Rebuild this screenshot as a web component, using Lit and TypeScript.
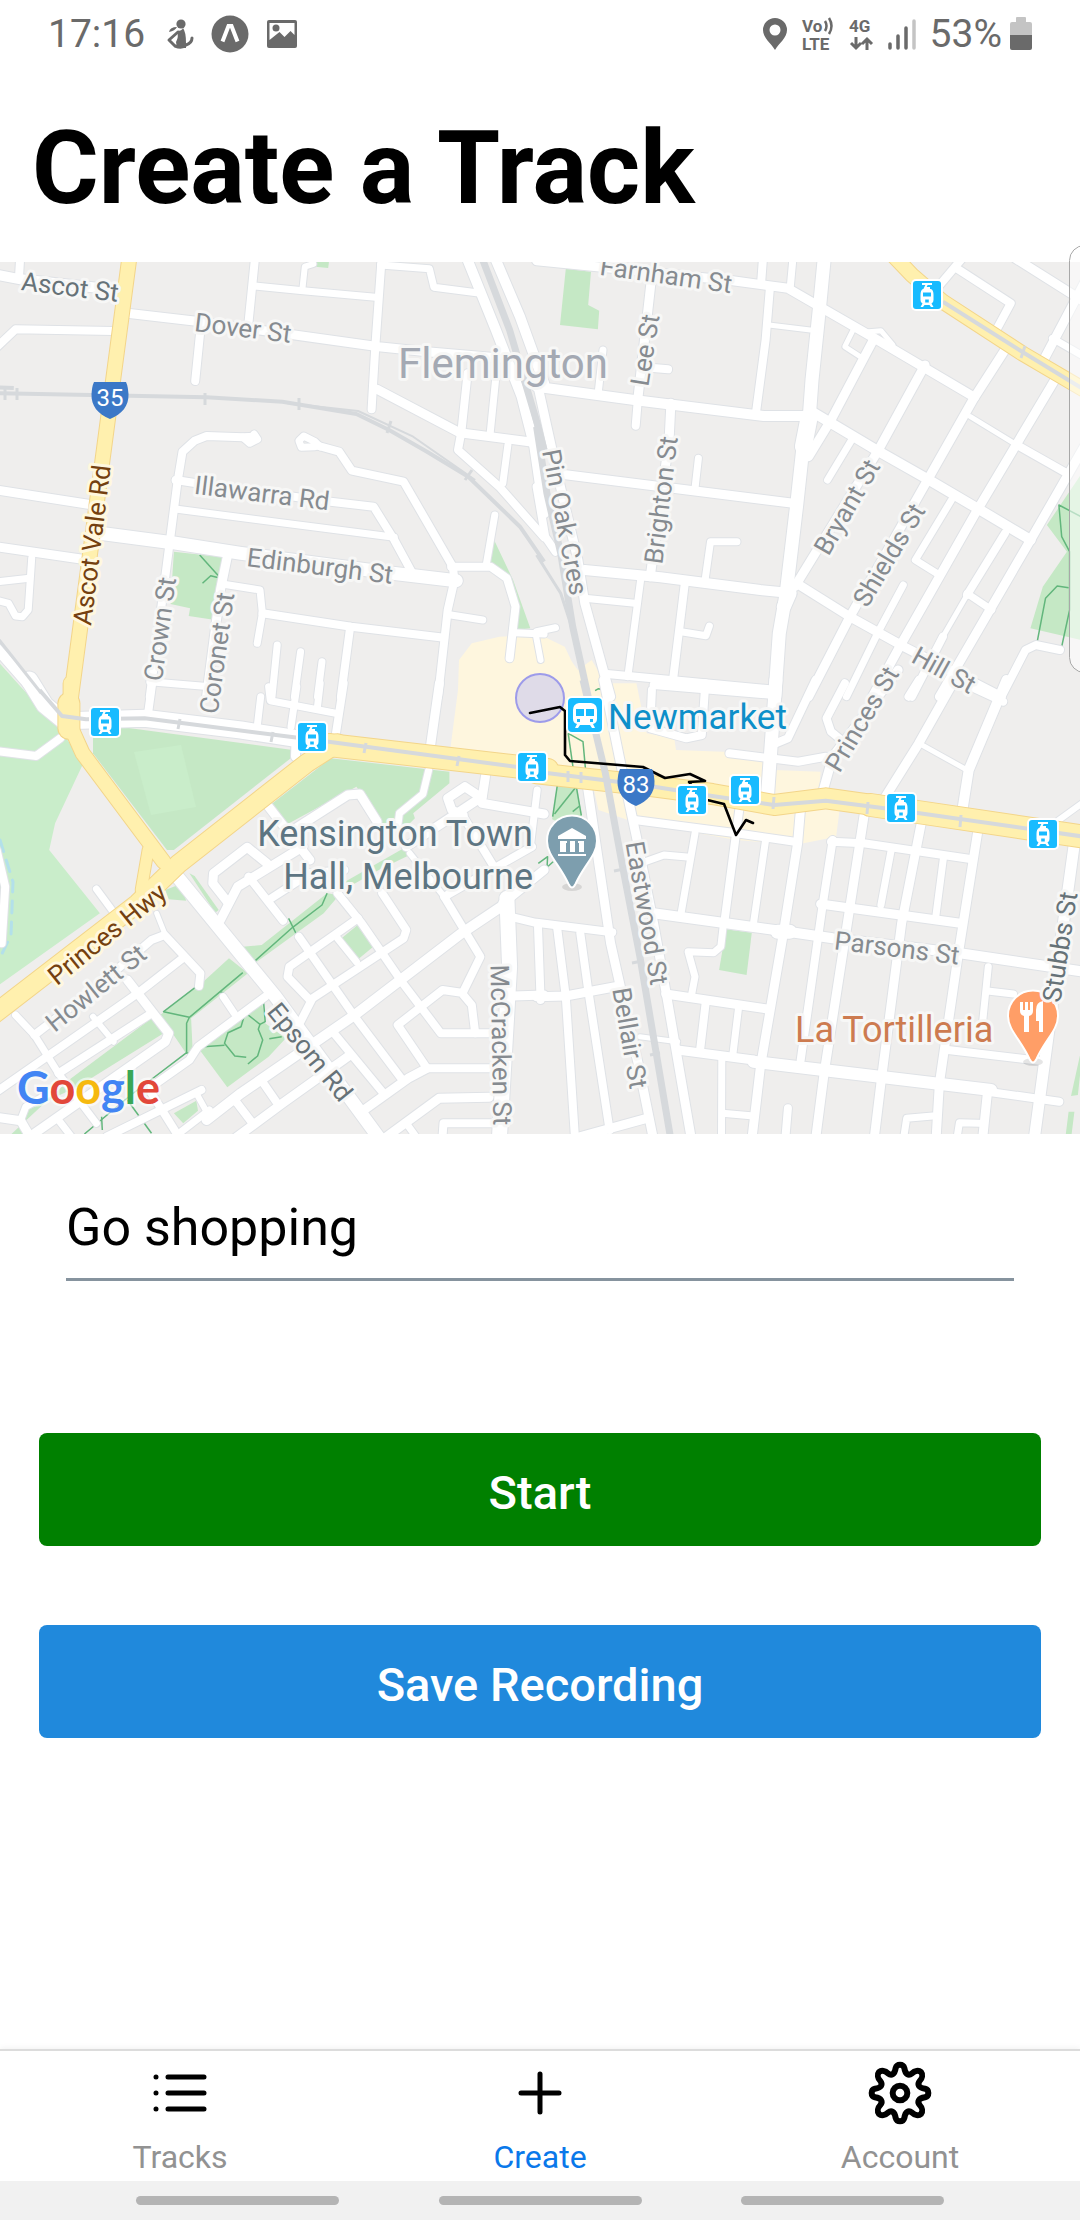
import { LitElement, html, css, svg } from "lit";
import { customElement, property } from "lit/decorators.js";

/** One survey sheet of the map: its origin in map pixels and its shapes in sheet units. */
interface Sheet {
  x: number;
  y: number;
  parks: string[];
  lawns: string[];
  shops: string[];
  paths: string[];
  roads: [number, string][];
  highways: [number, string][];
  rails: [number, string][];
}

interface Label {
  text: string;
  x: number;
  y: number;
  turn: number;
  kind: string;
}

const UNIT_X = 2.904;
const UNIT_Y = 3;

const project = (sheet: Sheet, points: string) =>
  points
    .split(" ")
    .map((pair) => {
      const [x, y] = pair.split(",").map(Number);
      return `${(sheet.x + x / UNIT_X).toFixed(1)},${(sheet.y + y / UNIT_Y).toFixed(1)}`;
    })
    .join(" ");

const SHEETS: Sheet[] = [
  {
    x: 0,
    y: 250,
    parks: [
      "505,905 650,922 625,1110 548,1098 552,1075 495,1062",
      "1435,870 1490,990 1540,1135 1500,1140 1500,1030 1470,975 1420,945",
      "912,36 955,36 953,54 915,50",
    ],
    lawns: [],
    shops: [],
    paths: ["580,915 638,982", "588,1000 612,977 638,984"],
    roads: [
      [10, "-10,74 60,88 340,120"],
      [8, "58,30 55,88"],
      [9, "370,190 570,214 1100,290 1240,305 1460,325"],
      [8, "740,30 722,215"],
      [7, "740,108 880,122 1090,142"],
      [6, "878,120 885,50 910,42"],
      [8, "1108,30 1090,290 1079,478"],
      [7, "1105,45 1247,56 1260,112 1395,130"],
      [8, "-10,292 45,238 330,243"],
      [8, "582,240 567,393"],
      [9, "1095,418 1335,548 1570,580"],
      [8, "1358,370 1340,545 1330,600 1450,710 1580,862"],
      [7, "1440,380 1423,555"],
      [7, "1475,585 1460,700"],
      [10, "1358,30 1440,240 1515,440 1552,590 1580,790"],
      [10, "1440,30 1510,200 1580,400"],
      [8, "740,560 705,562 600,558 565,572 530,605 515,700 490,900 435,1340"],
      [7, "738,552 748,568 725,580 705,562"],
      [8, "915,585 985,605 1022,662 1172,695 1315,950 1320,990 1300,1080 1272,1340"],
      [7, "915,590 875,592 868,572 882,558 915,575 930,590"],
      [8, "510,690 570,700 960,755 1085,770 1145,870 1195,965"],
      [7, "515,778 1145,862"],
      [9, "-10,720 270,765"],
      [9, "-10,890 240,928"],
      [13, "290,850 500,878 700,910 1140,970 1325,992"],
      [7, "92,925 82,1080 65,1100 45,1098 25,1060 -5,1052"],
      [7, "85,985 -5,995"],
      [9, "660,920 640,1020 600,1340"],
      [7, "650,1003 755,1020 762,1090 747,1180"],
      [8, "762,1090 1020,1130 1290,1163"],
      [8, "1017,1130 990,1340"],
      [7, "805,1185 790,1340"],
      [7, "873,1205 855,1340"],
      [7, "935,1235 922,1340"],
      [7, "1310,1095 1402,1110"],
      [7, "1437,795 1412,945"],
      [8, "1310,950 1425,950 1472,985 1497,1070 1480,1225"],
      [7, "1495,1148 1580,1152"],
      [6, "1555,1150 1570,1230"],
      [7, "435,1295 610,1310"],
      [10, "-10,1195 130,1360"],
    ],
    highways: [[14, "376,20 204,1360"]],
    rails: [
      [4, "-10,430 600,442 820,455 1035,492 1130,540 1240,605 1360,680 1510,830 1580,935"],
      [2, "835,460 1040,483 1200,560 1380,690"],
      [4, "-10,412 40,414"],
      [7, "1402,30 1480,240 1560,520 1580,600"],
      [3, "-10,1160 120,1330"],
    ],
  },
  {
    x: 540,
    y: 240,
    parks: [
      "75,86 148,95 140,195 172,212 168,268 58,255",
      "1580,690 1472,855 1530,935 1460,1040 1424,1165 1580,1202",
    ],
    lawns: [],
    shops: [],
    paths: [
      "1580,835 1507,795 1515,890 1538,935 1538,1110 1515,1220",
      "1443,1210 1468,1075 1502,1038 1535,1043",
    ],
    roads: [
      [9, "-10,62 180,82 560,122 720,145 960,288 1262,472"],
      [8, "648,50 642,130"],
      [7, "735,50 727,140"],
      [8, "668,140 655,300 627,520"],
      [13, "826,50 812,200 790,420 782,530"],
      [17, "782,530 765,620"],
      [13, "765,610 745,800 715,1060 695,1180 682,1370"],
      [14, "725,1060 708,1100"],
      [5, "665,255 785,270"],
      [9, "322,130 285,470"],
      [8, "285,470 278,557"],
      [8, "320,383 372,388"],
      [7, "183,330 170,450"],
      [10, "-10,440 290,482 650,528 790,528"],
      [9, "380,490 375,600 320,1010"],
      [9, "75,704 735,790"],
      [7, "460,655 450,745"],
      [10, "130,990 350,1012 640,1050 720,1058"],
      [7, "572,905 495,905 478,1030"],
      [7, "130,1075 275,1090"],
      [7, "292,1020 255,1310"],
      [8, "420,1035 385,1330"],
      [7, "410,1175 482,1187 492,1158"],
      [9, "-10,420 50,700 110,960 130,1090 205,1370"],
      [8, "-10,740 15,890 45,935"],
      [7, "-10,1175 45,1163"],
      [8, "195,1302 690,1350"],
      [8, "1230,50 1120,185"],
      [8, "1210,85 1367,190 1325,270"],
      [9, "1380,55 1580,185"],
      [9, "1580,130 1465,355"],
      [7, "1488,295 1580,350"],
      [9, "968,300 845,540 780,650"],
      [5, "910,268 885,320 930,350"],
      [5, "955,275 990,272 1025,315 965,300"],
      [9, "1118,375 980,635 740,1040"],
      [9, "1350,330 1260,475 1120,730 900,1130 780,1370"],
      [9, "1495,420 1270,810 1050,1210 965,1370"],
      [9, "1580,620 1430,890 1160,1370"],
      [5, "1250,530 1385,615"],
      [8, "1385,615 1530,700"],
      [10, "790,515 980,632 1130,720 1270,805 1425,900"],
      [7, "905,600 835,720"],
      [7, "1198,775 1090,960 1160,1005"],
      [8, "1350,880 1240,1065"],
      [5, "1240,1065 1170,1190"],
      [8, "1170,1190 1080,1370"],
      [7, "1240,1060 1312,1110"],
      [9, "745,1030 900,1130 1060,1222 1340,1370"],
      [7, "1055,1035 985,1170 890,1370"],
      [8, "1340,1370 1410,1230 1440,1215 1510,1230"],
    ],
    highways: [[14, "1020,40 1080,105 1170,185 1400,340 1590,455"]],
    rails: [
      [4, "1170,185 1400,335 1590,455"],
      [7, "-10,560 20,760 60,940 95,1160 140,1370"],
      [3, "-10,945 60,1060 98,1180"],
    ],
  },
  {
    x: 0,
    y: 690,
    parks: [
      "270,100 850,180 850,200 505,480 485,480 270,190",
      "960,205 1305,245 1305,280 1200,370 1205,385 1180,410 1110,400 1035,290 830,405 785,345",
      "665,805 720,850 555,985 560,1090 540,1090 465,975 580,885",
      "705,770 760,765 950,610 985,615 940,670 740,820",
      "440,985 475,1030 225,1190 60,1270 90,1325 20,1345 160,1210 200,1170",
      "580,1080 760,930 770,1000 830,1045 780,1100 660,1192",
      "1045,700 1090,765 1040,808 992,745",
      "505,1270 570,1232 575,1262 532,1300",
      "550,550 565,558 635,660 625,668",
      "480,600 530,580 540,632 490,628",
      "1180,470 1200,490 1100,540 980,610 960,600",
    ],
    lawns: [
      "-10,-90 60,-10 170,110 242,220 160,400 143,480 290,670 -10,890",
      "390,185 525,165 570,350 440,375",
    ],
    shops: ["1308,175 1330,0 1333,-90 1370,-140 1450,-160 1570,-165 1640,-130 1700,0 1700,260"],
    paths: [
      "570,890 475,965 550,982 705,848",
      "550,982 542,1000 542,1088 380,1215 245,1332",
      "552,1088 540,1090",
      "738,815 850,712 935,645 950,610",
      "838,685 862,735",
      "765,930 770,995 755,1003 712,968 700,1010 662,1028 652,1060 682,1098 715,1102",
      "755,1003 750,1018 763,1050 748,1098 720,1122",
      "590,1070 652,1066",
      "782,1046 818,1040",
      "370,1230 440,1330",
      "295,1280 297,1320",
      "1500,600 1580,530",
      "640,905 650,910",
    ],
    roads: [
      [17, "85,-30 130,45 195,100"],
      [17, "195,92 420,85 700,120 900,152"],
      [8, "-10,183 105,198 175,145"],
      [8, "442,-20 430,70"],
      [7, "757,20 748,100"],
      [7, "780,-10 785,32 975,70"],
      [7, "862,-10 845,110"],
      [7, "930,-20 922,50"],
      [8, "998,-20 975,135"],
      [9, "1276,-20 1250,170"],
      [7, "1245,240 1228,312 1160,370 1155,410"],
      [9, "860,150 858,200"],
      [9, "780,350 900,510"],
      [9, "820,440 1010,315 1045,312 1095,395"],
      [9, "775,520 718,472 620,550 618,580 660,635"],
      [9, "640,690 690,590 880,470"],
      [8, "722,560 822,692"],
      [8, "780,630 900,550 1000,540"],
      [9, "1410,258 1400,325 1350,290 1300,325 1312,360 1345,375"],
      [9, "1400,340 1580,372"],
      [7, "1560,300 1540,470"],
      [8, "1340,370 1440,540"],
      [8, "1545,470 1290,620"],
      [9, "1400,320 1180,470"],
      [10, "1470,640 1340,730 1030,975 700,1210 600,1290"],
      [9, "1460,640 1580,540"],
      [6, "1190,490 1290,620"],
      [8, "1290,620 1395,800 1345,905"],
      [15, "1472,625 1480,830 1450,1350"],
      [8, "1490,682 1562,700 1570,930"],
      [9, "1490,918 1580,915"],
      [8, "980,610 1050,700 1170,880 1280,1030 1420,1030"],
      [8, "1110,610 1180,720 1172,745 900,930 835,860 840,830 1040,685"],
      [8, "868,740 1030,980 1165,1165"],
      [7, "980,745 1035,815"],
      [8, "905,930 865,1010"],
      [8, "1380,1030 1370,945 1340,908 1285,900 1155,1005 1240,1135 1430,1135"],
      [8, "970,1030 1110,1205"],
      [9, "1050,1265 1185,1165 1240,1135"],
      [9, "650,1370 820,1240 1010,1100"],
      [9, "1110,1350 1275,1225 1420,1222"],
      [8, "1285,1340 1288,1300 1430,1300"],
      [7, "1180,1300 1215,1350"],
      [8, "688,1238 730,1295"],
      [8, "762,1175 802,1235"],
      [7, "45,975 100,1035 170,1150 280,1300"],
      [8, "-10,1205 400,910 530,805"],
      [8, "100,1035 270,900 440,750 478,735 582,850 578,888"],
      [5, "455,670 480,735"],
      [9, "370,870 490,1030 480,1055 80,1345"],
      [8, "170,1150 440,970"],
      [6, "270,980 330,1055"],
      [8, "770,920 575,1070 550,1110 440,1190"],
      [7, "648,920 680,970"],
      [8, "310,1340 585,1200"],
      [8, "440,1210 525,1350"],
      [7, "520,1330 608,1260"],
      [6, "570,1210 600,1265"],
      [9, "-10,1282 60,1292 90,1345"],
      [7, "60,1290 75,1250 150,1205"],
      [7, "170,1290 215,1350"],
      [7, "280,597 325,660"],
      [8, "-10,480 15,590 5,760"],
      [13, "515,560 800,920 1105,1350"],
    ],
    highways: [
      [11, "430,480 410,600"],
      [14, "205,-20 205,110 240,190 475,515"],
      [21, "200,40 200,115"],
      [18, "-20,975 400,640 520,520 890,220 980,160"],
      [22, "955,165 1590,240"],
    ],
    rails: [
      [4, "115,0 180,78 250,88 420,85 900,148 1590,243"],
    ],
  },
  {
    x: 540,
    y: 690,
    parks: [
      "540,718 615,728 600,855 520,840",
      "50,285 105,288 122,378 100,420 35,388",
      "1580,1040 1562,1215 1542,1218",
      "1535,1265 1552,1265 1543,1340 1527,1332",
    ],
    lawns: [],
    shops: [
      "-10,-160 60,-130 110,-60 150,-90 190,-20 280,-20 310,130 390,145 395,180 650,190 680,240 815,245 810,310 870,360 860,440 740,465 570,450 270,395 170,360 150,270 -10,270",
    ],
    paths: [
      "82,130 125,155 133,248",
      "82,130 97,240",
      "50,288 37,380",
      "105,288 120,376",
      "42,372 105,290",
      "95,365 115,348",
      "-10,560 38,515",
      "-5,520 22,500 20,540",
      "160,2 170,-4 182,-2",
    ],
    roads: [
      [9, "135,270 165,480 205,760 240,920 285,1120 330,1350"],
      [9, "185,-30 230,200 280,440 330,700 370,930 440,1350"],
      [8, "-10,698 210,727"],
      [8, "50,715 75,920 102,1350"],
      [8, "117,730 140,900 202,1320"],
      [9, "-10,920 75,918 230,888"],
      [9, "100,1345 310,1285"],
      [8, "275,390 570,430 740,455"],
      [8, "580,350 568,440 535,700"],
      [9, "757,350 748,460 705,740 640,1130 615,1350"],
      [7, "655,450 620,700"],
      [7, "450,430 410,668"],
      [7, "305,515 360,495 435,502"],
      [10, "330,670 540,700 720,725 850,745 1220,790 1580,845"],
      [14, "690,725 725,725"],
      [7, "533,700 525,770 505,788 430,785 450,860 440,915"],
      [9, "365,912 665,958"],
      [8, "482,930 465,1080"],
      [7, "577,950 560,1095"],
      [5, "290,1040 400,1055"],
      [9, "400,1080 620,1110"],
      [12, "620,1115 840,1142 1310,1200"],
      [8, "1300,1205 1508,1235"],
      [7, "528,1100 527,1350"],
      [7, "530,1270 620,1278"],
      [8, "720,1255 712,1350"],
      [8, "845,455 940,460 1250,507"],
      [8, "850,450 820,650 757,1110"],
      [9, "942,370 870,850 825,1150 800,1350"],
      [7, "1020,480 990,645"],
      [9, "1107,400 1050,700 990,1180 970,1350"],
      [7, "1172,500 1150,675"],
      [9, "815,642 1220,700"],
      [9, "1272,420 1215,790 1160,1180 1150,1350"],
      [7, "1302,830 1285,1000"],
      [7, "1300,903 1375,912"],
      [8, "1185,1080 1450,1112"],
      [11, "1552,460 1500,850 1435,1350"],
      [9, "1300,1200 1285,1350"],
      [7, "1055,1350 1065,1285 1140,1278"],
      [7, "1210,1350 1218,1298 1275,1300"],
      [8, "325,0 320,115 425,145 470,135 480,-20"],
      [8, "330,-15 680,15"],
      [13, "685,-30 660,325"],
      [8, "685,160 720,145 800,-30"],
      [8, "550,190 750,215 830,200"],
      [8, "885,-20 832,85 845,125 875,150"],
      [9, "1040,-60 850,200 820,310"],
      [9, "1215,-50 1100,160 1000,325"],
      [10, "1355,-30 1245,240 1228,350"],
      [5, "1100,160 1240,240"],
      [8, "1230,-20 1345,35"],
      [8, "1070,20 1100,-30"],
      [6, "1500,395 1580,335"],
    ],
    highways: [
      [20, "-10,250 300,285 500,312 680,345 830,325 1000,350"],
      [22, "960,345 1580,440"],
    ],
    rails: [
      [4, "-10,245 300,285 500,318 680,345 830,332 1000,355 1580,440"],
      [7, "125,-30 190,250 240,530 290,800 380,1350"],
    ],
  },
];

const LABELS: Label[] = [
  { text: "Ascot St", x: 70, y: 287, turn: 7, kind: "street dark" },
  { text: "Dover St", x: 243, y: 328, turn: 7, kind: "street" },
  { text: "Illawarra Rd", x: 262, y: 493, turn: 7, kind: "street" },
  { text: "Edinburgh St", x: 320, y: 566, turn: 7, kind: "street" },
  { text: "Ascot Vale Rd", x: 92, y: 545, turn: -83, kind: "street route" },
  { text: "Crown St", x: 160, y: 629, turn: -82, kind: "street" },
  { text: "Coronet St", x: 217, y: 653, turn: -82, kind: "street" },
  { text: "Farnham St", x: 666, y: 275, turn: 8, kind: "street" },
  { text: "Lee St", x: 645, y: 350, turn: -81, kind: "street" },
  { text: "Brighton St", x: 661, y: 500, turn: -83, kind: "street" },
  { text: "Pin Oak Cres", x: 565, y: 522, turn: 79, kind: "street" },
  { text: "Bryant St", x: 847, y: 507, turn: -60, kind: "street" },
  { text: "Shields St", x: 889, y: 555, turn: -59, kind: "street" },
  { text: "Hill St", x: 944, y: 670, turn: 29, kind: "street" },
  { text: "Princes St", x: 862, y: 719, turn: -59, kind: "street" },
  { text: "Eastwood St", x: 647, y: 913, turn: 80, kind: "street" },
  { text: "Bellair St", x: 630, y: 1038, turn: 80, kind: "street" },
  { text: "Parsons St", x: 897, y: 948, turn: 7, kind: "street" },
  { text: "Princes Hwy", x: 107, y: 934, turn: -39, kind: "street route" },
  { text: "Howlett St", x: 96, y: 988, turn: -39, kind: "street" },
  { text: "Epsom Rd", x: 310, y: 1052, turn: 51, kind: "street dark" },
  { text: "McCracken St", x: 501, y: 1045, turn: 89, kind: "street" },
];

const TRAM_STOPS = [
  [927, 295],
  [105, 722],
  [312, 737],
  [532, 767],
  [692, 800],
  [745, 790],
  [901, 808],
  [1043, 834],
];

const TRACK =
  "530,713 560,707 565,711 565,755 570,761 643,767 665,778 690,774 705,781 689,782 703,799 724,804 736,835 746,820 753,823";

@customElement("track-map")
export class TrackMap extends LitElement {
  static styles = css`
    :host {
      display: block;
    }
    .map {
      display: block;
      width: 100%;
      height: auto;
      background: #efeeed;
      font-family: Roboto, sans-serif;
    }
    .line {
      fill: none;
      stroke-linecap: round;
      stroke-linejoin: round;
    }
    .edge {
      stroke: #dfe2e6;
    }
    .road {
      stroke: #fff;
    }
    .highway-edge {
      stroke: #f3d58a;
    }
    .highway {
      stroke: #fff0ae;
    }
    .rail {
      stroke: #d6d9dc;
      stroke-linecap: butt;
    }
    .park {
      fill: #c5e8c5;
    }
    .lawn {
      fill: #c9edca;
    }
    .shop {
      fill: #fef6de;
    }
    .path {
      stroke: #62b67c;
      stroke-width: 1.5;
      stroke-linecap: butt;
    }
    .creek {
      stroke: #b3e0ea;
      stroke-width: 3;
      stroke-dasharray: 12 9;
    }
    .label {
      paint-order: stroke;
      stroke: #f7f7f6;
      stroke-width: 6;
      stroke-linejoin: round;
      fill: #868b90;
    }
    .street {
      font-size: 26px;
      text-anchor: middle;
    }
    .dark {
      fill: #667278;
    }
    .route {
      fill: #74400f;
      stroke: #fff8de;
    }
    .place {
      font-size: 36px;
    }
    .end {
      text-anchor: end;
    }
    .suburb {
      font-size: 42px;
      fill: #a4a9b3;
    }
    .station {
      font-size: 35px;
      fill: #0d8fc9;
    }
    .civic {
      fill: #5d7582;
    }
    .food {
      fill: #cd7b50;
    }
    .shield-text {
      font-size: 24px;
      fill: #fff;
      text-anchor: middle;
    }
    .track {
      stroke: #000;
      stroke-width: 2.6;
    }
    .logo {
      font-family: Lato, sans-serif;
      font-size: 45px;
      font-weight: 700;
      paint-order: stroke;
      stroke: rgba(255, 255, 255, 0.6);
      stroke-width: 5;
    }
    .g-blue {
      fill: #4285f4;
    }
    .g-red {
      fill: #e2473a;
    }
    .g-yellow {
      fill: #f6b90f;
    }
    .g-green {
      fill: #3aa757;
    }
  `;

  private areas(kind: "parks" | "lawns" | "shops", name: string) {
    return SHEETS.map((s) => s[kind].map((p) => svg`<polygon class=${name} points=${project(s, p)} />`));
  }

  private lines(kind: "roads" | "highways" | "rails", name: string, extra: number) {
    return SHEETS.map((s) =>
      s[kind].map(
        ([width, p]) =>
          svg`<polyline class="line ${name}" stroke-width=${width + extra} points=${project(s, p)} />`
      )
    );
  }

  private tram([x, y]: number[]) {
    return svg`<g transform="translate(${x} ${y})">
      <rect x="-16" y="-16" width="32" height="32" rx="5" fill="#fff" />
      <rect x="-14" y="-14" width="28" height="28" rx="3" fill="#18bbff" />
      <path d="M-5 -11h10M0 -11L-2 -7H2V-4" fill="none" stroke="#fff" stroke-width="2" />
      <path fill="#fff" fill-rule="evenodd" d="M-4 -6H4Q6.500 -5 6.500 0V5Q6.500 8 4.500 8.500L6.500 12H4L2.500 10H-2.500L-4 12H-6.500L-4.500 8.500Q-6.500 8 -6.500 5V0Q-6.500 -5 -4 -6ZM-4 -2.500V1.500H4V-2.500ZM-1.800 4.500h3.600v3h-3.600Z" />
    </g>`;
  }

  private shield(x: number, y: number, text: string) {
    return svg`<g transform="translate(${x} ${y})">
      <path d="M-16 -18H16C18 -14 18 -10 18.500 -6C19 6 12 14 0 19C-12 14 -19 6 -18.500 -6C-18 -10 -18 -14 -16 -18Z" fill="#3b78c7" />
      <text class="shield-text" y="6">${text}</text>
    </g>`;
  }

  private pin(x: number, y: number, color: string) {
    return svg`<ellipse cx=${x} cy=${y + 46} rx="10" ry="4" fill="#000" opacity="0.1" />
      <path transform="translate(${x} ${y})" fill=${color} stroke="#fff" stroke-width="2"
        d="M0 -25.500A25 25 0 0 1 25 0C25 14 12 24 3.500 43Q0 50 -3.500 43C-12 24 -25 14 -25 0A25 25 0 0 1 0 -25.500Z" />`;
  }

  render() {
    return html`
      <svg class="map" viewBox="0 262 1080 872" role="img" aria-label="Map of the recorded track">
        ${this.areas("lawns", "lawn")} ${this.areas("parks", "park")}
        <polygon class="lawn" points="134,752 181,745 196,807 151,815" />
        ${this.areas("shops", "shop")}
        <polyline class="line creek" points="0,840 13,882 11,935 -2,962" />
        ${SHEETS.map((s) => s.paths.map((p) => svg`<polyline class="line path" points=${project(s, p)} />`))}
        ${this.lines("roads", "edge", 2)} ${this.lines("roads", "road", 0)}
        ${this.lines("highways", "highway-edge", 2)} ${this.lines("highways", "highway", 0)}
        ${this.lines("rails", "rail", 0)}
        <path
          class="line rail"
          stroke-width="3"
          d="M5 388v12M17 388v12M205 393v12M299 398v12M391 421l-4 12M472 470l-7 10M180 719l-2 10M273 732l-2 10M366 743l-2 10M459 756l-2 10M774 797l-1 12M868 802l-1 12M961 815l-1 12M568 771v11M581 772v11M614 871l10-2M632 963l10-2M650 1055l10-2M1025 346l-4 12"
        />
        <circle cx="540" cy="698" r="24" fill="#d9d6ea" fill-opacity="0.85" stroke="#9d9bea" stroke-width="2" />
        <polyline class="line track" points=${TRACK} />

        ${LABELS.map(
          (l) =>
            svg`<text class="label ${l.kind}" dy="9" transform="translate(${l.x} ${l.y}) rotate(${l.turn})">${l.text}</text>`
        )}
        <text class="label suburb" x="398" y="378">Flemington</text>
        ${TRAM_STOPS.map((stop) => this.tram(stop))}
        <g transform="translate(585 715)">
          <rect x="-19" y="-19" width="38" height="38" rx="6" fill="#fff" />
          <rect x="-17" y="-17" width="34" height="34" rx="4" fill="#18bbff" />
          <path
            fill="#fff"
            fill-rule="evenodd"
            d="M-6 -12H6Q12 -11 12 -5V4Q12 8 8 9L10 13H7L5 10H-5L-7 13H-10L-8 9Q-12 8 -12 4V-5Q-12 -11 -6 -12ZM-9 -6V1H-1V-6ZM1 -6V1H9V-6ZM-8 4V7H-5V4ZM5 4V7H8V4Z"
          />
        </g>
        <text class="label place station" x="608" y="729">Newmarket</text>
        ${this.shield(110, 400, "35")} ${this.shield(636, 787, "83")} ${this.pin(572, 841, "#7d9eae")}
        <path
          fill="#fff"
          d="M572 828l14 8v3h-28v-3ZM560 841h7v2h-1v9h-6ZM570 841h5v11h-5ZM578 841h6v11h-5v-9h-1ZM558 854h28v2h-28Z"
        />
        <text class="label place civic end" x="533" y="846">Kensington Town</text>
        <text class="label place civic end" x="533" y="889">Hall, Melbourne</text>
        ${this.pin(1033, 1016, "#ff9e67")}
        <path
          fill="#fff"
          d="M1020 1002h3v8h2v-8h3v8h2v-8h3v9q0 4-4 5v16h-5v-16q-4-1-4-5ZM1043 1001v31h-4v-11h-3v-11q0-8 7-9Z"
        />
        <text class="label street dark" dy="9" transform="translate(1060 947) rotate(-81)">Stubbs St</text>
        <text class="label place food" x="795" y="1042">La Tortilleria</text>
        <text class="logo" x="17" y="1104"><tspan class="g-blue">G</tspan><tspan class="g-red">o</tspan><tspan class="g-yellow">o</tspan><tspan class="g-blue">g</tspan><tspan class="g-green">l</tspan><tspan class="g-red">e</tspan></text>
      </svg>
    `;
  }
}

@customElement("status-bar")
export class StatusBar extends LitElement {
  static styles = css`
    :host {
      display: flex;
      justify-content: space-between;
      align-items: center;
      height: 68px;
      padding: 0 48px;
      color: #6a6a6a;
      font: 400 39px/44px Roboto, sans-serif;
    }
    .group {
      display: flex;
      align-items: center;
      gap: 13px;
    }
    .notices {
      gap: 17px;
    }
    .clock {
      margin-right: 4px;
    }
    .charge {
      display: flex;
      align-items: center;
      gap: 8px;
    }
    svg {
      display: block;
      overflow: visible;
    }
    .tiny {
      font: 700 17px Roboto, sans-serif;
    }
  `;

  render() {
    return html`
      <div class="group notices">
        <span class="clock">17:16</span>
        <svg width="28" height="32" viewBox="0 0 28 32">
          <circle cx="15" cy="6" r="4.600" fill="#6a6a6a" />
          <path d="M3 14q1-5 8-5q-2 4-8 5Z" fill="#6a6a6a" />
          <path d="M11 13q5 0 6-3q3 4 3 15v5H11l-1-6q3-5 1-11Z" fill="#6a6a6a" />
          <path
            d="M12 14L3 22L9 28Q16 31 20 27Q26 25 26 20"
            fill="none"
            stroke="#6a6a6a"
            stroke-width="3"
            stroke-linecap="round"
            stroke-linejoin="round"
          />
        </svg>
        <svg width="38" height="38" viewBox="0 0 38 38">
          <circle cx="19" cy="19" r="18.500" fill="#6a6a6a" />
          <path d="M11.500 26.500L17.500 11h3L26.500 26.500" fill="none" stroke="#fff" stroke-width="4" />
        </svg>
        <svg width="32" height="32" viewBox="0 0 32 32">
          <rect x="1" y="2" width="30" height="28" rx="2" fill="#6a6a6a" />
          <path d="M3.500 5h25v12l-4-4l-6 6l-5-5l-10 8Z" fill="#fff" />
          <circle cx="10" cy="10" r="3.500" fill="#6a6a6a" />
        </svg>
      </div>
      <div class="group">
        <svg width="26" height="34" viewBox="0 0 26 34">
          <path
            fill="#6a6a6a"
            fill-rule="evenodd"
            d="M13 1a12 12 0 0 1 12 12c0 8-8 13-12 20c-4-7-12-12-12-20a12 12 0 0 1 12-12ZM13 7.500a5.500 5.500 0 1 0 0 11a5.500 5.500 0 0 0 0-11Z"
          />
        </svg>
        <svg width="34" height="36" viewBox="0 0 34 36" fill="#6a6a6a">
          <text class="tiny" x="1" y="16">Vo</text>
          <text class="tiny" x="1" y="34">LTE</text>
          <path d="M24 5q3 5 0 10M28 2q5 8 0 16" fill="none" stroke="#6a6a6a" stroke-width="2.500" />
        </svg>
        <svg width="26" height="36" viewBox="0 0 26 36" fill="#6a6a6a">
          <text class="tiny" x="1" y="16">4G</text>
          <path
            d="M8 21v11M3 27l5 5l5-5M19 34v-11M14 28l5-5l5 5"
            fill="none"
            stroke="#6a6a6a"
            stroke-width="3"
          />
        </svg>
        <svg width="30" height="34" viewBox="0 0 30 34" stroke-width="3.500" stroke-linecap="round">
          <path d="M3 27v4M11 19v12M19 11v20" stroke="#6a6a6a" />
          <path d="M27 4v27" stroke="#c4c4c4" />
        </svg>
        <span class="charge">
          <span>53%</span>
          <svg width="22" height="34" viewBox="0 0 22 34">
            <path d="M6 1q0-1 1-1h8q1 0 1 1v4h4q2 0 2 2v12H0V7q0-2 2-2h4Z" fill="#c4c4c4" />
            <path d="M0 18h22v13q0 2-2 2H2q-2 0-2-2Z" fill="#6a6a6a" />
          </svg>
        </span>
      </div>
    `;
  }
}

const ICONS: Record<string, unknown> = {
  Tracks: svg`<path d="M12 16h36M12 32h36M12 48h36" stroke-width="5" /><path d="M0 16h0.010M0 32h0.010M0 48h0.010" stroke-width="5" />`,
  Create: svg`<path d="M32 13v38M13 32h38" stroke-width="5" />`,
  Account: svg`<g transform="translate(32 32) scale(0.3333)" stroke-width="18"><circle r="22" /><path d="M0 -85C7 -85 11 -82 13 -75C16 -55 26 -51 36 -59C44 -67 56 -69 63 -63C69 -56 67 -44 59 -36C51 -26 55 -16 75 -13C82 -11 85 -7 85 0C85 7 82 11 75 13C55 16 51 26 59 36C67 44 69 56 63 63C56 69 44 67 36 59C26 51 16 55 13 75C11 82 7 85 0 85C-7 85 -11 82 -13 75C-16 55 -26 51 -36 59C-44 67 -56 69 -63 63C-69 56 -67 44 -59 36C-51 26 -55 16 -75 13C-82 11 -85 7 -85 0C-85 -7 -82 -11 -75 -13C-55 -16 -51 -26 -59 -36C-67 -44 -69 -56 -63 -63C-56 -69 -44 -67 -36 -59C-26 -51 -16 -55 -13 -75C-11 -82 -7 -85 0 -85Z" /></g>`,
};

@customElement("tab-bar")
export class TabBar extends LitElement {
  @property() active = "Create";

  static styles = css`
    :host {
      display: block;
      border-top: 2px solid #dcdcdc;
      box-shadow: 0 -1px 6px rgba(0, 0, 0, 0.06);
    }
    .tabs {
      display: grid;
      grid-template-columns: repeat(3, 1fr);
    }
    .tab {
      display: flex;
      flex-direction: column;
      align-items: center;
      gap: 13px;
      padding: 10px 0 5px;
      color: #929292;
      font: 400 32px/38px Roboto, sans-serif;
      text-decoration: none;
    }
    .active {
      color: #0a78ea;
    }
    .icon {
      width: 64px;
      height: 64px;
      overflow: visible;
      fill: none;
      stroke: #000;
      stroke-linecap: round;
      stroke-linejoin: round;
    }
  `;

  render() {
    return html`<nav class="tabs">
      ${Object.entries(ICONS).map(
        ([name, icon]) => html`<a class="tab ${name === this.active ? "active" : ""}" href="#${name.toLowerCase()}">
          <svg class="icon" viewBox=${name === "Tracks" ? "-8 0 64 64" : "0 0 64 64"}>${icon}</svg>
          <span>${name}</span>
        </a>`
      )}
    </nav>`;
  }
}

@customElement("app-root")
export class AppRoot extends LitElement {
  static styles = css`
    :host {
      display: block;
      font-family: Roboto, sans-serif;
    }
    .screen {
      position: relative;
      display: flex;
      flex-direction: column;
      min-height: 100vh;
      background: #fff;
      overflow: hidden;
    }
    .title {
      margin: 0;
      padding: 40px 32px 34px;
      font-size: 102px;
      line-height: 120px;
      font-weight: 700;
      color: #000;
    }
    .form {
      display: flex;
      flex-direction: column;
      flex: 1;
      padding: 42px 39px;
    }
    .name {
      margin: 0 27px 152px;
      padding: 0;
      height: 105px;
      box-sizing: border-box;
      border: 0;
      border-bottom: 3px solid #86939e;
      border-radius: 0;
      background: none;
      color: #000;
      font: 400 52px/60px Roboto, sans-serif;
      outline: none;
    }
    .action {
      height: 113px;
      border: 0;
      border-radius: 8px;
      padding: 6px 0 0;
      color: #fff;
      font: 500 47px/56px Roboto, sans-serif;
    }
    .start {
      background: #008000;
      margin-bottom: 79px;
    }
    .save {
      background: #2089dc;
    }
    .gestures {
      display: flex;
      justify-content: space-between;
      align-items: center;
      height: 39px;
      padding: 0 136px;
      background: #f1f1f1;
    }
    .gesture {
      width: 203px;
      height: 9px;
      border-radius: 5px;
      background: #b4b4b4;
    }
    .edge-panel {
      position: absolute;
      top: 245px;
      right: -20px;
      width: 29px;
      height: 426px;
      border: 1px solid #a8a8a8;
      border-radius: 18px;
      background: rgba(255, 255, 255, 0.55);
    }
  `;

  render() {
    return html`
      <div class="screen">
        <status-bar></status-bar>
        <h1 class="title">Create a Track</h1>
        <track-map></track-map>
        <form class="form" @submit=${(e: Event) => e.preventDefault()}>
          <input class="name" type="text" aria-label="Track name" value="Go shopping" />
          <button class="action start" type="button">Start</button>
          <button class="action save" type="submit">Save Recording</button>
        </form>
        <tab-bar active="Create"></tab-bar>
        <div class="gestures">
          <span class="gesture"></span><span class="gesture"></span><span class="gesture"></span>
        </div>
        <div class="edge-panel"></div>
      </div>
    `;
  }
}
